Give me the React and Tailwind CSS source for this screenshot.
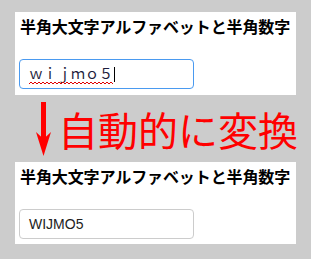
export default function App() {
  const jp = { fontFamily: '"Noto Sans CJK JP", "Noto Sans", sans-serif' };
  let wave = "M0 2";
  for (let i = 0; i < 21; i++) {
    const x = i * 4;
    wave += ` L${x + 2} 0 L${x + 4} 2`;
  }
  return (
    <div className="w-[311px] h-[259px] bg-[#cccccc] pt-[12px] px-[15px]" style={jp}>
      <div className="bg-white h-[83px] pt-[2px] pl-[4px]">
        <div className="text-[16px] leading-[24px] font-bold text-black pl-[1px] tracking-[-0.1px]">
          半角大文字アルファベットと半角数字
        </div>
        <div className="mt-[21px] w-[175px] h-[30px] rounded-[4px] border-[1.5px] border-[#4a9af0] flex items-center pl-[9px]">
          <span className="flex flex-col mt-[3px]">
            <span className="text-[14px] leading-[15px] text-[#1c1c3c]">ｗｉｊｍｏ５</span>
            <svg width="84" height="3" viewBox="0 0 84 3" className="mt-[1px]">
              <path d={wave} fill="none" stroke="#e00000" strokeWidth="1" />
            </svg>
          </span>
          <span className="w-[1px] h-[15px] bg-black ml-[1px]" />
        </div>
      </div>
      <div className="h-[67px] flex items-center">
        <svg width="15" height="56" viewBox="0 0 15 56" className="ml-[21px] mt-[2px] shrink-0">
          <rect x="5" y="0" width="5" height="40" fill="#ff0000" />
          <polygon points="0,30 7.5,37 15,30 7.5,54" fill="#ff0000" />
        </svg>
        <div className="ml-[7px] text-[40px] leading-[40px] text-[#ff0000] whitespace-nowrap">
          自動的に変換
        </div>
      </div>
      <div className="bg-white h-[82px] pt-[2px] pl-[4px]">
        <div className="text-[16px] leading-[24px] font-bold text-black pl-[1px] tracking-[-0.1px]">
          半角大文字アルファベットと半角数字
        </div>
        <div className="mt-[21px] w-[175px] h-[30px] rounded-[4px] border border-[#cccccc] flex items-center pl-[9px]">
          <span
            className="text-[14px] text-[#222]"
            style={{ fontFamily: '"Liberation Sans", Arial, sans-serif' }}
          >
            WIJMO5
          </span>
        </div>
      </div>
    </div>
  );
}
